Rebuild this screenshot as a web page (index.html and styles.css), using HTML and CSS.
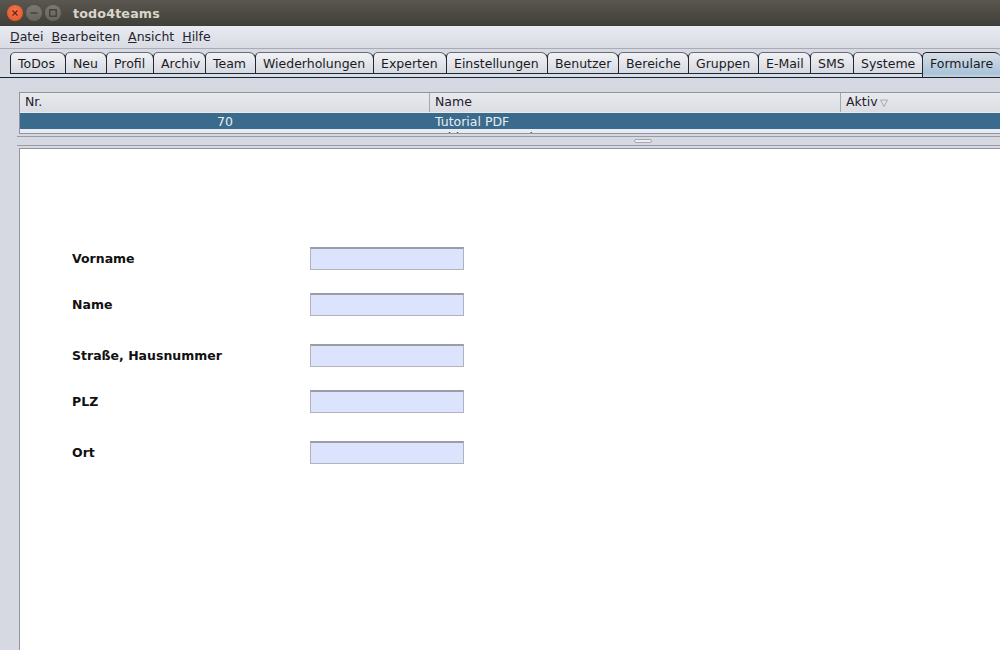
FILE: index.html
```html
<!DOCTYPE html>
<html lang="de">
<head>
<meta charset="utf-8">
<title>todo4teams</title>
<link rel="stylesheet" href="styles.css">
</head>
<body>
<div class="window">
  <header class="titlebar">
    <div class="controls">
      <span class="ctl close"><svg viewBox="0 0 8 8"><path d="M1.5 1.5l5 5M6.5 1.5l-5 5"/></svg></span>
      <span class="ctl min"><svg viewBox="0 0 8 8"><path d="M.5 4h7"/></svg></span>
      <span class="ctl max"><svg viewBox="0 0 8 8"><rect x=".8" y=".8" width="6.4" height="6.4"/></svg></span>
    </div>
    <span class="title">todo4teams</span>
  </header>
  <nav class="menubar">
    <span><u>D</u>atei</span>
    <span><u>B</u>earbeiten</span>
    <span><u>A</u>nsicht</span>
    <span><u>H</u>ilfe</span>
  </nav>
  <div class="tabs">
    <span class="tab">ToDos</span>
    <span class="tab">Neu</span>
    <span class="tab">Profil</span>
    <span class="tab">Archiv</span>
    <span class="tab">Team</span>
    <span class="tab">Wiederholungen</span>
    <span class="tab">Experten</span>
    <span class="tab">Einstellungen</span>
    <span class="tab">Benutzer</span>
    <span class="tab">Bereiche</span>
    <span class="tab">Gruppen</span>
    <span class="tab">E-Mail</span>
    <span class="tab">SMS</span>
    <span class="tab">Systeme</span>
    <span class="tab active">Formulare</span>
  </div>
  <main class="content">
    <section class="table">
      <div class="thead">
        <div class="th col-nr">Nr.</div>
        <div class="th col-name">Name</div>
        <div class="th col-aktiv">Aktiv<svg class="sort" viewBox="0 0 8 8"><path d="M.5 1h7L4 7.5z"/></svg></div>
      </div>
      <div class="row selected">
        <div class="td col-nr num">70</div>
        <div class="td col-name">Tutorial PDF</div>
        <div class="td col-aktiv"></div>
      </div>
      <div class="row clipped">
        <div class="td col-nr"></div>
        <div class="td col-name">Add new record</div>
        <div class="td col-aktiv"></div>
      </div>
    </section>
    <div class="divider"><span class="grip"></span></div>
    <section class="form">
      <div class="field f1"><label>Vorname</label><span class="input"></span></div>
      <div class="field f2"><label>Name</label><span class="input"></span></div>
      <div class="field f3"><label>Straße, Hausnummer</label><span class="input"></span></div>
      <div class="field f2"><label>PLZ</label><span class="input"></span></div>
      <div class="field f3"><label>Ort</label><span class="input"></span></div>
    </section>
  </main>
</div>
</body>
</html>
```
FILE: styles.css
```css
* { box-sizing: border-box; }
html, body { margin: 0; height: 100%; overflow: hidden; }
body { font-family: "DejaVu Sans", sans-serif; font-size: 13px; color: #1a1a24; background: #d6d9e2; }
.window { width: 1000px; height: 650px; display: flex; flex-direction: column; overflow: hidden; }

.titlebar { height: 26px; flex: none; display: flex; align-items: center; padding-left: 7px; background: linear-gradient(#5a5750, #403e38); }
.controls { display: flex; gap: 3px; width: 66px; }
.ctl { width: 16px; height: 16px; border-radius: 50%; display: flex; align-items: center; justify-content: center; }
.ctl svg { width: 8px; height: 8px; fill: none; stroke-width: 1.2; }
.close { background: radial-gradient(circle at 50% 40%, #f27a4e, #e04e22); }
.close svg { stroke: #6a2410; }
.min, .max { background: linear-gradient(#7a7870, #66645d); }
.min svg, .max svg { stroke: #3b3934; }
.title { font-weight: 700; font-size: 12.7px; letter-spacing: .15px; color: #d9d5cb; }

.menubar { height: 23px; flex: none; display: flex; gap: 8px; align-items: center; padding: 0 10px 2px; font-size: 12.5px; background: linear-gradient(#e9ebf1, #d8dbe3); border-bottom: 1px solid #a9acb5; }
.menubar span { color: #24242e; }

.tabs { height: 29px; flex: none; display: grid; grid-template-columns: 55px 41px 47px 52px 50px 118px 73px 101px 71px 70px 70px 52px 43px 69px 78px; align-items: start; padding: 3px 0 0 10px; background: linear-gradient(#d6d9e2 25px, #d3e0ec 25px); border-bottom: 1px solid #1d2028; }
.tab { height: 22px; padding: 0 0 0 7px; display: flex; align-items: center; font-size: 12.5px; white-space: nowrap; margin-right: -1px; border: 1px solid #23262e; border-top-color: #6a6d75; border-radius: 5px 7px 0 0; background: linear-gradient(#f1f2f5, #d6d9e1); }
.tab.active { height: 25px; padding-bottom: 3px; border-bottom: 0; border-top-color: #23262e; border-right: 0; background: linear-gradient(#d8dfe7, #a9c3d8 85%, #c3d5e4); }

.content { flex: 1; min-height: 0; display: flex; flex-direction: column; padding: 14px 0 0 17px; background: #d6d9e2; }
.table { height: 42px; flex: none; margin-left: 2px; overflow: hidden; border: 1px solid #93959e; border-right: 0; background: #e8ebf1; }
.thead { height: 19px; display: flex; background: linear-gradient(#e9eaee, #dcdde3); }
.th { font-size: 12.5px; padding: 0 5px; line-height: 17px; color: #20202c; border-right: 1px solid #a6a8b0; }
.col-nr { width: 410px; }
.col-name { width: 411px; }
.col-aktiv { flex: 1; border-right: 0; }
.sort { width: 8px; height: 8px; margin-left: 2px; vertical-align: -1px; fill: none; stroke: #9a9ca4; stroke-width: .8; }
.row { height: 16px; display: flex; font-size: 12.5px; line-height: 17px; }
.td { padding: 0 5px; }
.num { text-align: right; padding-right: 197px; }
.selected { background: #3a6a8c; color: #e8eef4; margin-top: 1px; }
.clipped { color: #333; }

.divider { height: 10px; flex: none; position: relative; border: solid #9a9ca4; border-width: 1px 0; margin-top: 2px; }
.grip { position: absolute; left: 617px; top: 2px; width: 18px; height: 4px; border: 1px solid #a4a6ae; border-radius: 2px; background: #eceef2; }

.form { flex: 1; margin: 2px 0 0 2px; background: #fff; border: 1px solid #93959e; border-right: 0; border-bottom: 0; padding: 98px 0 0 52px; }
.field { display: flex; align-items: center; height: 23px; }
.f2 { margin-top: 23px; }
.f3 { margin-top: 28px; }
.field label { width: 238px; font-weight: 700; font-size: 12.5px; color: #111; }
.input { width: 154px; height: 23px; background: #dce3fd; border: 1px solid #b0b3bd; border-top: 2px solid #9a9ca6; }
```
